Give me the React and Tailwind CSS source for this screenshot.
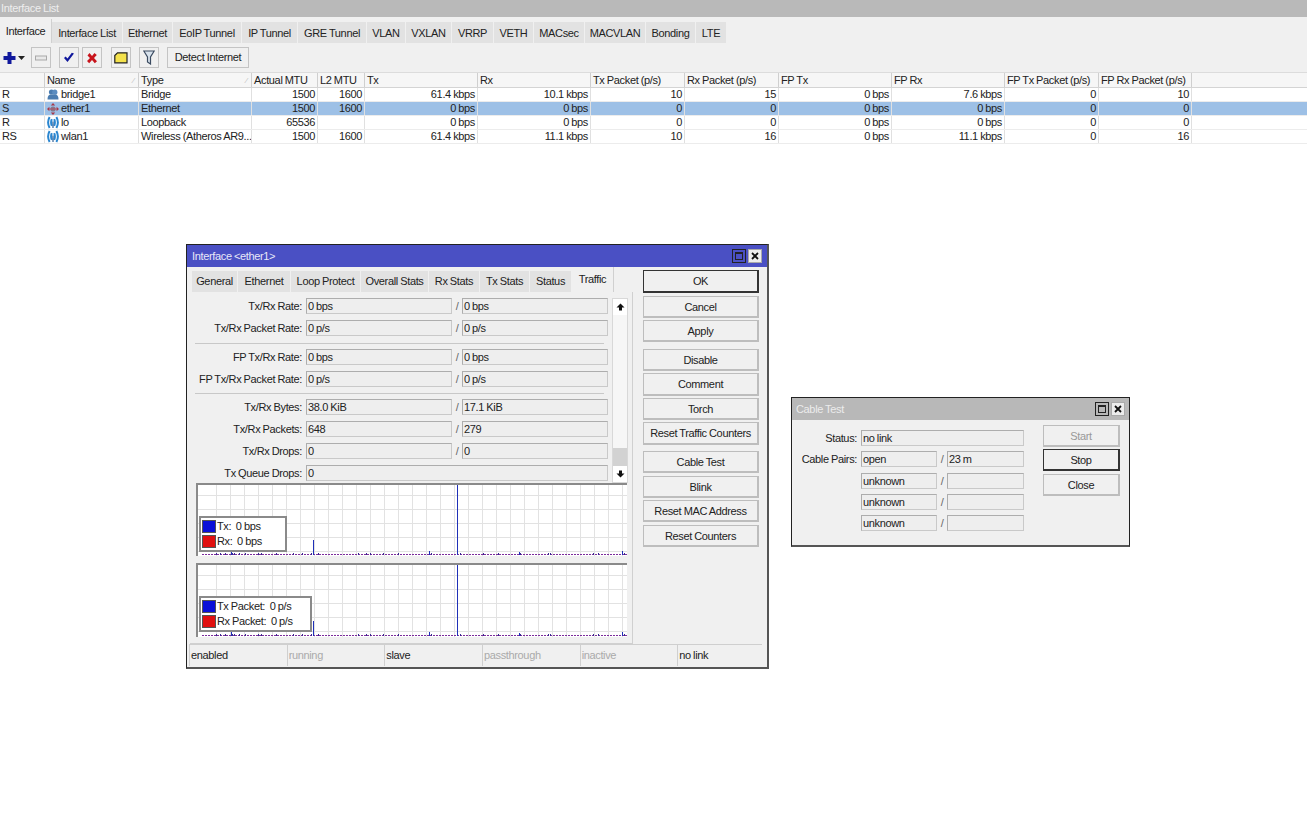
import React from "react";

const font = "font-['Liberation_Sans',Arial,sans-serif] tracking-[-0.35px] [word-spacing:-0.4px]";

const tabs = [
  ["Interface", 52], ["Interface List", 71], ["Ethernet", 50], ["EoIP Tunnel", 69], ["IP Tunnel", 56], ["GRE Tunnel", 69],
  ["VLAN", 39], ["VXLAN", 46], ["VRRP", 42], ["VETH", 40], ["MACsec", 51], ["MACVLAN", 61], ["Bonding", 50], ["LTE", 31],
];

const gridCols = "grid grid-cols-[45px_94px_113px_66px_47px_113px_113px_94px_94px_113px_113px_94px_93px_1fr]";

const headers = ["", "Name", "Type", "Actual MTU", "L2 MTU", "Tx", "Rx", "Tx Packet (p/s)", "Rx Packet (p/s)", "FP Tx", "FP Rx", "FP Tx Packet (p/s)", "FP Rx Packet (p/s)", ""];

const rows = [
  ["R", "bridge1", "bridge", "Bridge", "1500", "1600", "61.4 kbps", "10.1 kbps", "10", "15", "0 bps", "7.6 kbps", "0", "10"],
  ["S", "ether1", "ether", "Ethernet", "1500", "1600", "0 bps", "0 bps", "0", "0", "0 bps", "0 bps", "0", "0"],
  ["R", "lo", "wifi", "Loopback", "65536", "", "0 bps", "0 bps", "0", "0", "0 bps", "0 bps", "0", "0"],
  ["RS", "wlan1", "wifi", "Wireless (Atheros AR9...", "1500", "1600", "61.4 kbps", "11.1 kbps", "10", "16", "0 bps", "11.1 kbps", "0", "16"],
];

function RowIcon({ type }) {
  if (type === "bridge")
    return (
      <svg width="12" height="12" viewBox="0 0 12 12">
        <circle cx="4.5" cy="3" r="2.6" fill="#4a7cb0" />
        <circle cx="7.8" cy="3.2" r="2.6" fill="#5a8cc0" />
        <path d="M0.5 10.5 Q0.5 5.5 4 5.5 L8 5.5 Q11.5 5.5 11.5 10.5 Z" fill="#4a7cb0" />
      </svg>
    );
  if (type === "ether")
    return (
      <svg width="12" height="12" viewBox="0 0 12 12">
        <path d="M6 0 L8.2 2.4 L3.8 2.4 Z M6 12 L8.2 9.6 L3.8 9.6 Z M0 6 L2.4 3.8 L2.4 8.2 Z M12 6 L9.6 3.8 L9.6 8.2 Z" fill="#a83848" />
        <circle cx="6" cy="6" r="2.6" fill="#86788c" />
        <path d="M2 6 H10" stroke="#b05060" strokeWidth="1" />
      </svg>
    );
  return (
    <svg width="12" height="13" viewBox="0 0 12 13" fill="none">
      <path d="M2.6 1 Q-0.4 6.5 2.6 12 M4.8 3.2 Q3.4 6.5 4.8 9.8" stroke="#2a86d0" strokeWidth="2" />
      <path d="M9.4 1 Q12.4 6.5 9.4 12 M7.2 3.2 Q8.6 6.5 7.2 9.8" stroke="#2a86d0" strokeWidth="2" />
      <path d="M6 5.5 V12" stroke="#2d5f98" strokeWidth="1.2" />
    </svg>
  );
}

function ToolBtn({ w, ml, children }) {
  return (
    <div
      style={{ width: w, marginLeft: ml }}
      className="h-[21px] flex items-center justify-center bg-[#f0f0f0] border border-[#c4c4c4] text-[11px] text-[#222]"
    >
      {children}
    </div>
  );
}

function Toolbar() {
  return (
    <div className="h-[30px] bg-[#f0f0f0] flex items-start pt-[4px] border-b border-[#dcdcdc]">
      <div className="ml-[3px] w-[24px] h-[21px] flex items-center">
        <svg width="24" height="14" viewBox="0 0 24 14">
          <path d="M4.5 1 H8.5 V5 H12.5 V9 H8.5 V13 H4.5 V9 H0.5 V5 H4.5 Z" fill="#10189c" />
          <path d="M15 5 H22 L18.5 9 Z" fill="#222" />
        </svg>
      </div>
      <ToolBtn w={20} ml={4}>
        <svg width="12" height="6" viewBox="0 0 12 6"><rect x="0.5" y="1" width="11" height="4" fill="#e8e8e8" stroke="#a8a8a8" /></svg>
      </ToolBtn>
      <ToolBtn w={20} ml={8}>
        <svg width="12" height="11" viewBox="0 0 12 11"><path d="M1 6 L4.5 10 L11 1.5 L8.8 0.8 L4.5 6.5 L2.6 4.4 Z" fill="#10189c" /></svg>
      </ToolBtn>
      <ToolBtn w={20} ml={3}>
        <svg width="12" height="12" viewBox="0 0 12 12"><path d="M1.5 3.5 L3.5 1 L6 4 L8.5 1 L10.8 3 L8 6 L11 9.2 L8.8 11.2 L6 8 L3.2 11.2 L1 9 L4 6 Z" fill="#c8141c" /></svg>
      </ToolBtn>
      <ToolBtn w={20} ml={9}>
        <svg width="14" height="12" viewBox="0 0 14 12"><path d="M0.8 3.5 L3.5 0.8 H13 V10.8 H0.8 Z" fill="#f4e24c" stroke="#222" strokeWidth="1.2" /></svg>
      </ToolBtn>
      <ToolBtn w={20} ml={8}>
        <svg width="12" height="15" viewBox="0 0 12 15" fill="none"><path d="M0.8 1 H11.2 L7.5 7 V14 L4.5 12 V7 Z" fill="#d8e2ec" stroke="#3a4a60" strokeWidth="1.2" /></svg>
      </ToolBtn>
      <ToolBtn w={82} ml={8}>Detect Internet</ToolBtn>
    </div>
  );
}

function ListTable() {
  return (
    <div>
      <div className={`${gridCols} h-[15px] bg-[#f6f6f6] border-b border-[#d4d4d4] text-[11px] text-[#222]`}>
        {headers.map((h, i) => (
          <div key={i} className="relative px-[2px] border-r border-[#cfcfcf] leading-[15px] whitespace-nowrap overflow-hidden last:border-r-0">
            {h}
            {(i === 1 || i === 2) && <span className="absolute right-[4px] top-0 text-[8px] text-[#bbb]">⁄</span>}
          </div>
        ))}
      </div>
      {rows.map((r, idx) => {
        const [flag, name, icon, type, ...rest] = r;
        return (
          <div key={name} className={`${gridCols} h-[14px] text-[11px] leading-[13px] text-[#222] border-b border-[#ececec] ${idx === 1 ? "bg-[#9dc0e6]" : "bg-white"}`}>
            <div className="px-[2px] border-r border-[#e0e0e0]">{flag}</div>
            <div className="pl-[2px] border-r border-[#e0e0e0] flex items-center">
              <RowIcon type={icon} />
              <span className="ml-[2px]">{name}</span>
            </div>
            <div className="px-[2px] border-r border-[#e0e0e0] whitespace-nowrap overflow-hidden">{type}</div>
            {rest.map((v, i) => (
              <div key={i} className="px-[2px] text-right border-r border-[#e0e0e0]">{v}</div>
            ))}
            <div />
          </div>
        );
      })}
    </div>
  );
}

function TitleControls() {
  return (
    <div className="flex items-center gap-[2px]">
      <div className="w-[14px] h-[14px] border border-[#222] flex items-center justify-center">
        <div className="w-[8px] h-[8px] border border-[#222] border-t-2" />
      </div>
      <div className="w-[14px] h-[14px] border border-[#aaa] bg-[#ededed] flex items-center justify-center">
        <svg width="8" height="8" viewBox="0 0 8 8"><path d="M1 1 L7 7 M7 1 L1 7" stroke="#111" strokeWidth="1.8" /></svg>
      </div>
    </div>
  );
}

function Field({ w, children }) {
  return (
    <div
      style={{ width: w }}
      className="h-[16px] bg-[#eeeeee] border border-[#adadad] border-r-[#c9c9c9] border-b-[#c9c9c9] px-[1px] text-[11px] leading-[15px] text-[#222] whitespace-nowrap overflow-hidden shrink-0"
    >
      {children}
    </div>
  );
}

function Slash({ w = 10 }) {
  return <div style={{ width: w }} className="text-center text-[11px] leading-[16px] text-[#666] shrink-0">/</div>;
}

function FormRow({ label, a, b }) {
  return (
    <div className="flex items-center h-[16px] mb-[6px]">
      <div className="w-[112px] text-right text-[11px] text-[#222] whitespace-nowrap shrink-0">{label}:</div>
      <div className="w-[4px] shrink-0" />
      {b !== undefined ? (
        <>
          <Field w={146}>{a}</Field>
          <Slash />
          <Field w={146}>{b}</Field>
        </>
      ) : (
        <Field w={302}>{a}</Field>
      )}
    </div>
  );
}

function Sep({ t = 7 }) {
  return <div style={{ marginTop: t }} className="h-[1px] bg-[#c8c8c8] ml-[5px] mr-[4px] mb-[5px]" />;
}

const smallTicks = [18, 22, 27, 34, 36, 41, 47, 60, 63, 78, 95, 104, 113, 120, 160, 168, 172, 185, 200, 233, 262, 285, 300, 322, 350, 352, 395, 400, 426];

function Chart({ h, legendW, legendBottom, legend }) {
  const vs = Array.from({ length: 30 }, (_, i) => 19 + i * 14);
  const hs = Array.from({ length: 5 }, (_, i) => 11 + i * 14);
  return (
    <div style={{ height: h }} className="relative w-[431px] border-t-2 border-l-2 border-[#8a8a8a] bg-white overflow-hidden">
      <svg width="431" height={h} className="block">
        {vs.map((x) => <line key={x} x1={x - 0.5} x2={x - 0.5} y1="0" y2={h} stroke="#e2e2e2" />)}
        {hs.map((y) => <line key={y} x1="0" x2="431" y1={y - 0.5} y2={y - 0.5} stroke="#e2e2e2" />)}
        <line x1="4" x2="429" y1={h - 3.5} y2={h - 3.5} stroke="#7c2d9c" strokeDasharray="2 1" />
        {smallTicks.map((x) => <line key={x} x1={x + 0.5} x2={x + 0.5} y1={h - 5} y2={h - 3} stroke="#3a2a90" />)}
        <line x1="259.5" x2="259.5" y1="0" y2={h - 3} stroke="#1f30b8" />
        <line x1="115.5" x2="115.5" y1={h - 18} y2={h - 3} stroke="#1f30b8" />
        <line x1="33.5" x2="33.5" y1={h - 7} y2={h - 3} stroke="#1f30b8" />
        <line x1="231.5" x2="231.5" y1={h - 7} y2={h - 3} stroke="#1f30b8" />
        <line x1="321.5" x2="321.5" y1={h - 6} y2={h - 3} stroke="#1f30b8" />
        <line x1="424.5" x2="424.5" y1={h - 7} y2={h - 3} stroke="#1f30b8" />
      </svg>
      <div
        style={{ width: legendW, bottom: legendBottom }}
        className="absolute left-[1px] h-[36px] bg-white border-2 border-[#8a8a8a] pl-[1px] pt-[1px] text-[11px] text-[#222] leading-[15px] flex flex-col gap-0"
      >
        {legend.map(([c, t]) => (
          <div key={t} className="flex items-center h-[15px] gap-[1px]">
            <div className={`w-[14px] h-[13px] border border-[#555] ${c}`} />
            <span className="whitespace-pre">{t}</span>
          </div>
        ))}
      </div>
    </div>
  );
}

function ActBtn({ children, mt = 2, primary, disabled, h = 22 }) {
  return (
    <div
      style={{ marginTop: mt, height: h }}
      className={`flex items-center justify-center pt-[1px] bg-[#f0f0f0] text-[11px] whitespace-nowrap ${primary ? "border border-r-2 border-b-2 border-[#333]" : "border-2 border-[#bdbdbd] border-l border-t"} ${disabled ? "text-[#999]" : "text-[#222]"}`}
    >
      {children}
    </div>
  );
}

function Scrollbar() {
  return (
    <div className="w-[16px] h-[185px] ml-[4px] flex flex-col border border-[#d8d8d8] bg-[#f4f4f4]">
      <div className="h-[16px] bg-white flex items-center justify-center">
        <svg width="9" height="8" viewBox="0 0 9 8"><path d="M4.5 0.5 L8.5 4.5 H6 V7.5 H3 V4.5 H0.5 Z" fill="#111" /></svg>
      </div>
      <div className="flex-1 bg-[#f6f6f6]" />
      <div className="h-[18px] bg-[#d2d2d2]" />
      <div className="h-[16px] bg-white flex items-center justify-center">
        <svg width="9" height="8" viewBox="0 0 9 8"><path d="M4.5 7.5 L8.5 3.5 H6 V0.5 H3 V3.5 H0.5 Z" fill="#111" /></svg>
      </div>
    </div>
  );
}

function InterfaceWindow() {
  const wtabs = [["General", 46], ["Ethernet", 53], ["Loop Protect", 70], ["Overall Stats", 68], ["Rx Stats", 51], ["Tx Stats", 50], ["Status", 42]];
  return (
    <div className="absolute left-[186px] top-[244px] w-[583px] h-[425px] bg-[#f0f0f0] border border-[#222] border-r-2 border-b-2 border-r-[#555] border-b-[#555] flex flex-col">
      <div className="h-[22px] bg-[#4a50c4] flex items-center justify-between pl-[5px] pr-[5px] text-[11px] text-[#e8e8f8] shrink-0">
        <span>Interface &lt;ether1&gt;</span>
        <TitleControls />
      </div>
      <div className="flex flex-1 min-h-0">
        <div className="w-[443px] ml-[3px] shrink-0 flex flex-col">
          <div className="flex pl-[2px] h-[25px] items-end">
            {wtabs.map(([t, w]) => (
              <div key={t} style={{ width: w }} className="h-[21px] bg-[#e2e2e2] border-r border-[#f0f0f0] flex items-center justify-center text-[11px] text-[#222] whitespace-nowrap">{t}</div>
            ))}
            <div className="w-[42px] h-[25px] bg-[#f0f0f0] border-r border-[#d0d0d0] flex items-start justify-center pt-[4px] text-[11px] text-[#222]">Traffic</div>
          </div>
          <div className="h-[352px] border-r border-b border-[#d0d0d0] pt-[6px]">
            <div className="flex">
              <div>
                <FormRow label="Tx/Rx Rate" a="0 bps" b="0 bps" />
                <FormRow label="Tx/Rx Packet Rate" a="0 p/s" b="0 p/s" />
                <Sep t={7} />
                <FormRow label="FP Tx/Rx Rate" a="0 bps" b="0 bps" />
                <FormRow label="FP Tx/Rx Packet Rate" a="0 p/s" b="0 p/s" />
                <Sep t={6} />
                <FormRow label="Tx/Rx Bytes" a="38.0 KiB" b="17.1 KiB" />
                <FormRow label="Tx/Rx Packets" a="648" b="279" />
                <FormRow label="Tx/Rx Drops" a="0" b="0" />
                <FormRow label="Tx Queue Drops" a="0" />
              </div>
              <Scrollbar />
            </div>
            <div className="ml-[6px] -mt-[4px] flex flex-col gap-[7px]">
              <Chart h={73} legendW={88} legendBottom={4} legend={[["bg-[#0a10d8]", "Tx:  0 bps"], ["bg-[#e01010]", "Rx:  0 bps"]]} />
              <Chart h={74} legendW={113} legendBottom={5} legend={[["bg-[#0a10d8]", "Tx Packet:  0 p/s"], ["bg-[#e01010]", "Rx Packet:  0 p/s"]]} />
            </div>
          </div>
        </div>
        <div className="w-[116px] ml-[10px] shrink-0 pt-[3px]">
          <ActBtn primary mt={0} h={23}>OK</ActBtn>
          <ActBtn mt={3}>Cancel</ActBtn>
          <ActBtn mt={2}>Apply</ActBtn>
          <ActBtn mt={7}>Disable</ActBtn>
          <ActBtn mt={2} h={23}>Comment</ActBtn>
          <ActBtn mt={2}>Torch</ActBtn>
          <ActBtn mt={2} h={23}>Reset Traffic Counters</ActBtn>
          <ActBtn mt={6}>Cable Test</ActBtn>
          <ActBtn mt={3}>Blink</ActBtn>
          <ActBtn mt={2}>Reset MAC Address</ActBtn>
          <ActBtn mt={3}>Reset Counters</ActBtn>
        </div>
      </div>
      <div className="flex h-[22px] ml-[2px] mr-[5px] mb-[1px] shrink-0 text-[11px] leading-[20px]">
        {[["enabled", 98, 0], ["running", 98, 1], ["slave", 98, 0], ["passthrough", 98, 1], ["inactive", 98, 1], ["no link", 85, 0]].map(([t, w, off]) => (
          <div key={t} style={{ width: w }} className={`pl-[1px] border-l border-t border-[#cfcfcf] ${off ? "text-[#aaa]" : "text-[#222]"}`}>{t}</div>
        ))}
      </div>
    </div>
  );
}

function CablePair({ label, a, b }) {
  return (
    <div className="flex items-center h-[16px] mb-[5.33px]">
      <div className="w-[65px] text-right text-[11px] text-[#222] whitespace-nowrap shrink-0">{label}</div>
      <div className="w-[4px] shrink-0" />
      {b === undefined ? (
        <Field w={163}>{a}</Field>
      ) : (
        <>
          <Field w={76}>{a}</Field>
          <Slash />
          <Field w={77}>{b}</Field>
        </>
      )}
    </div>
  );
}

function CableWindow() {
  return (
    <div className="absolute left-[791px] top-[397px] w-[339px] h-[150px] bg-[#f0f0f0] border border-[#222] border-b-2 border-b-[#555] flex flex-col">
      <div className="h-[22px] bg-[#b8b8b8] flex items-center justify-between pl-[4px] pr-[4px] text-[11px] text-[#ececec] shrink-0">
        <span>Cable Test</span>
        <TitleControls />
      </div>
      <div className="flex pt-[10px]">
        <div className="w-[251px] shrink-0">
          <CablePair label="Status:" a="no link" />
          <CablePair label="Cable Pairs:" a="open" b="23 m" />
          <CablePair label="" a="unknown" b="" />
          <CablePair label="" a="unknown" b="" />
          <CablePair label="" a="unknown" b="" />
        </div>
        <div className="w-[77px] -mt-[5px]">
          <ActBtn mt={0} disabled>Start</ActBtn>
          <ActBtn mt={2} primary>Stop</ActBtn>
          <ActBtn mt={3}>Close</ActBtn>
        </div>
      </div>
    </div>
  );
}

export default function App() {
  return (
    <div className={`${font} relative w-full min-h-[813px] bg-white overflow-hidden`}>
      <div className="h-[17px] bg-[#b9b9b9] text-[11px] leading-[17px] text-[#eeeeee] pl-[1px]">Interface List</div>
      <div className="h-[26px] bg-[#f0f0f0] flex items-end">
        {tabs.map(([t, w], i) => (
          <div
            key={t}
            style={{ width: w }}
            className={`flex justify-center text-[11px] text-[#222] whitespace-nowrap ${i === 0 ? "h-[24px] bg-[#f0f0f0] pt-[4px] border-r border-[#d0d0d0]" : "h-[21px] items-center pt-[1px] bg-[#e2e2e2] border-r border-[#f0f0f0]"}`}
          >
            {t}
          </div>
        ))}
      </div>
      <Toolbar />
      <ListTable />
      <InterfaceWindow />
      <CableWindow />
    </div>
  );
}
